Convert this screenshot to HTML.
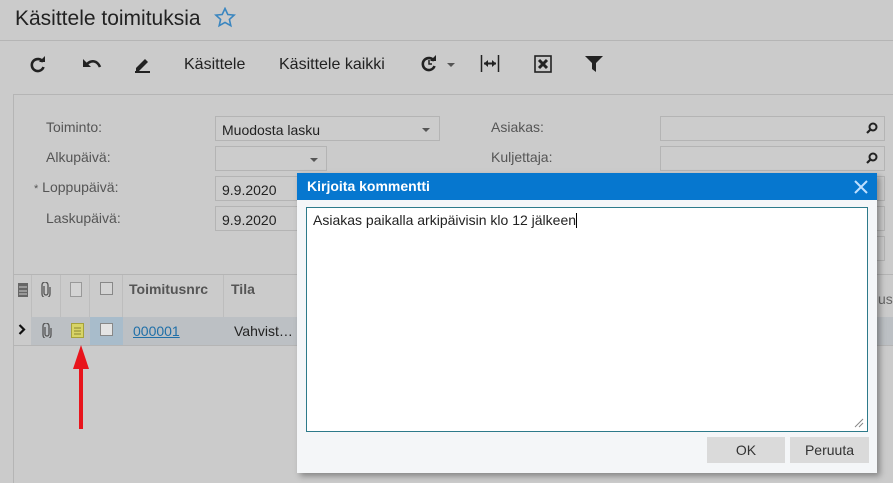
<!DOCTYPE html>
<html><head><meta charset="utf-8"><style>
*{margin:0;padding:0;box-sizing:border-box}
body{width:893px;height:483px;overflow:hidden;background:#cbcbcb;font-family:"Liberation Sans",Arial,sans-serif;position:relative;color:#222}
.a{position:absolute}
.t{font-size:14px;color:#555}
.fld{position:absolute;border:1px solid #b4b4b4;background:#cccccc;height:25px;font-size:14px;padding:5px 0 0 6px;color:#222}
.dd{position:absolute;width:0;height:0;border-left:4px solid transparent;border-right:4px solid transparent;border-top:4px solid #555}
.tb{position:absolute;top:56px;font-size:16px;color:#222}
</style></head><body>
<div class="a" style="left:15px;top:7px;font-size:21px;color:#222">Käsittele toimituksia</div>
<svg class="a" style="left:214px;top:7px" width="22" height="21" viewBox="0 0 22 21"><path d="M11 1.5l2.8 6 6.4.6-4.8 4.3 1.4 6.3L11 15.4l-5.8 3.3 1.4-6.3L1.8 8.1l6.4-.6z" fill="none" stroke="#3a86c0" stroke-width="1.6"/></svg>
<div class="a" style="left:0;top:40px;width:893px;height:1px;background:#b5b5b5"></div>
<svg class="a" style="left:29px;top:56px" width="18" height="18" viewBox="0 0 18 18"><path d="M14 6A6 6 0 1 0 14.5 11" fill="none" stroke="#222" stroke-width="2.6"/><path d="M10 6h6V0z" fill="#222"/></svg>
<svg class="a" style="left:82px;top:57px" width="20" height="14" viewBox="0 0 20 14"><path d="M5 7c4-4 10-4 13 3" fill="none" stroke="#222" stroke-width="2.6"/><path d="M1 2v8h8z" fill="#222"/></svg>
<svg class="a" style="left:133px;top:55px" width="20" height="18" viewBox="0 0 20 18"><path d="M3 13l9-9 3 3-9 9H3z" fill="#222"/><rect x="2" y="16" width="15" height="2" fill="#222"/></svg>
<div class="tb" style="left:184px">Käsittele</div>
<div class="tb" style="left:279px">Käsittele kaikki</div>
<svg class="a" style="left:420px;top:55px" width="18" height="18" viewBox="0 0 18 18"><path d="M14 6A6 6 0 1 0 14.5 11" fill="none" stroke="#222" stroke-width="2.6"/><path d="M10 6h6V0z" fill="#222"/><path d="M9 5v4h3" fill="none" stroke="#222" stroke-width="1.5"/></svg>
<div class="dd" style="left:447px;top:63px"></div>
<svg class="a" style="left:480px;top:55px" width="20" height="17" viewBox="0 0 20 17"><path d="M1.5 0v17M18.5 0v17" stroke="#222" stroke-width="1.5"/><path d="M4 8.5h12" stroke="#222" stroke-width="2"/><path d="M4 8.5l4-3.5v7zM16 8.5l-4-3.5v7z" fill="#222"/></svg>
<svg class="a" style="left:534px;top:55px" width="18" height="18" viewBox="0 0 18 18"><rect x="1" y="1" width="16" height="16" fill="none" stroke="#222" stroke-width="1.6"/><path d="M5 5l8 8M13 5l-8 8" stroke="#222" stroke-width="3"/></svg>
<svg class="a" style="left:585px;top:56px" width="18" height="16" viewBox="0 0 18 16"><path d="M0 0h18l-7 7v9l-4-3V7z" fill="#222"/></svg>
<div class="a" style="left:13px;top:94px;width:880px;height:1px;background:#b5b5b5"></div>
<div class="a" style="left:13px;top:94px;width:1px;height:389px;background:#b5b5b5"></div>
<div class="a t" style="left:46px;top:119px">Toiminto:</div>
<div class="a t" style="left:46px;top:149px">Alkupäivä:</div>
<div class="a t" style="left:34px;top:179px"><span style="font-size:11px">*</span> Loppupäivä:</div>
<div class="a t" style="left:46px;top:210px">Laskupäivä:</div>
<div class="fld" style="left:215px;top:116px;width:225px">Muodosta lasku</div><div class="dd" style="left:422px;top:128px"></div>
<div class="fld" style="left:215px;top:146px;width:112px"></div><div class="dd" style="left:310px;top:158px"></div>
<div class="fld" style="left:215px;top:176px;width:90px">9.9.2020</div>
<div class="fld" style="left:215px;top:206px;width:90px">9.9.2020</div>
<div class="a t" style="left:491px;top:119px">Asiakas:</div>
<div class="a t" style="left:491px;top:149px">Kuljettaja:</div>
<div class="fld" style="left:660px;top:116px;width:225px"></div>
<div class="fld" style="left:660px;top:146px;width:225px"></div>
<svg class="a" style="left:866px;top:122px" width="12" height="12" viewBox="0 0 12 12"><circle cx="7" cy="5" r="3.5" fill="none" stroke="#222" stroke-width="2"/><path d="M4.5 7.5L1 11" stroke="#222" stroke-width="2.2"/></svg>
<svg class="a" style="left:866px;top:152px" width="12" height="12" viewBox="0 0 12 12"><circle cx="7" cy="5" r="3.5" fill="none" stroke="#222" stroke-width="2"/><path d="M4.5 7.5L1 11" stroke="#222" stroke-width="2.2"/></svg>
<div class="fld" style="left:860px;top:176px;width:25px"></div>
<div class="fld" style="left:860px;top:206px;width:25px"></div>
<div class="fld" style="left:860px;top:236px;width:25px"></div>
<div class="a" style="left:13px;top:274px;width:880px;height:1px;background:#b5b5b5"></div>
<div class="a" style="left:31px;top:317px;width:862px;height:28px;background:#bcc0c4"></div>
<div class="a" style="left:13px;top:345px;width:880px;height:1px;background:#b5b5b5"></div>
<div class="a" style="left:90px;top:317px;width:33px;height:28px;background:#a8bccb"></div>
<div class="a" style="left:31px;top:275px;width:1px;height:42px;background:#bdbdbd"></div>
<div class="a" style="left:60px;top:275px;width:1px;height:42px;background:#bdbdbd"></div>
<div class="a" style="left:89px;top:275px;width:1px;height:42px;background:#bdbdbd"></div>
<div class="a" style="left:122px;top:275px;width:1px;height:42px;background:#bdbdbd"></div>
<div class="a" style="left:223px;top:275px;width:1px;height:42px;background:#bdbdbd"></div>
<svg class="a" style="left:17px;top:282px" width="12" height="16" viewBox="0 0 12 16"><rect x="1" y="1" width="10" height="14" fill="#666"/><path d="M2 5h8M2 9h8M2 12h8" stroke="#ccc"/></svg>
<svg class="a" style="left:41px;top:282px" width="10" height="15" viewBox="0 0 10 15"><path d="M3 4v7a2 2 0 0 0 4 0V3a3 3 0 0 0-6 0v9a4 4 0 0 0 8 0V5" fill="none" stroke="#555" stroke-width="1.3"/></svg>
<svg class="a" style="left:42px;top:323px" width="10" height="15" viewBox="0 0 10 15"><path d="M3 4v7a2 2 0 0 0 4 0V3a3 3 0 0 0-6 0v9a4 4 0 0 0 8 0V5" fill="none" stroke="#555" stroke-width="1.3"/></svg>
<div class="a" style="left:70px;top:282px;width:12px;height:15px;border:1px solid #999;background:#d4d4d4"></div>
<svg class="a" style="left:71px;top:323px" width="13" height="15" viewBox="0 0 13 15"><rect x=".5" y=".5" width="12" height="14" fill="#d8d466" stroke="#a6a23a"/><path d="M3 5h7M3 8h7M3 11h7" stroke="#8a8630"/></svg>
<div class="a" style="left:100px;top:282px;width:13px;height:13px;border:1px solid #888;background:#d4d4d4"></div>
<div class="a" style="left:100px;top:323px;width:13px;height:13px;border:1px solid #888;background:#e4e4e4"></div>
<div class="a" style="left:129px;top:281px;font-size:14px;font-weight:bold;color:#555">Toimitusnrc</div>
<div class="a" style="left:231px;top:281px;font-size:14px;font-weight:bold;color:#555">Tila</div>
<svg class="a" style="left:18px;top:324px" width="8" height="11" viewBox="0 0 8 11"><path d="M1.5 1l4.5 4.5L1.5 10" fill="none" stroke="#111" stroke-width="2.2"/></svg>
<div class="a" style="left:133px;top:323px;font-size:14px;color:#1f6fa8;text-decoration:underline">000001</div>
<div class="a" style="left:234px;top:323px;font-size:14px;color:#222">Vahvist…</div>
<div class="a" style="left:878px;top:291px;font-size:14px;color:#666">us</div>
<div class="a" style="left:79px;top:355px;width:4px;height:74px;background:#e8141c"></div>
<div class="a" style="left:73px;top:345px;width:0;height:0;border-left:8px solid transparent;border-right:8px solid transparent;border-bottom:24px solid #e8141c"></div>
<div class="a" style="left:297px;top:173px;width:580px;height:300px;background:#f4f6f8;box-shadow:3px 3px 6px rgba(0,0,0,.35)"></div>
<div class="a" style="left:297px;top:173px;width:580px;height:27px;background:#0677cf"></div>
<div class="a" style="left:307px;top:178px;font-size:14px;font-weight:bold;color:#fff">Kirjoita kommentti</div>
<svg class="a" style="left:854px;top:180px" width="14" height="14" viewBox="0 0 14 14"><path d="M1 1l12 12M13 1L1 13" stroke="#bfe0ff" stroke-width="2"/></svg>
<div class="a" style="left:306px;top:207px;width:562px;height:225px;background:#fff;border:1px solid #2d7a8a"></div>
<div class="a" style="left:313px;top:212px;font-size:14px;color:#222">Asiakas paikalla arkipäivisin klo 12 jälkeen<span style="display:inline-block;width:1px;height:15px;background:#000;vertical-align:-3px"></span></div>
<svg class="a" style="left:852px;top:416px" width="12" height="12" viewBox="0 0 12 12"><path d="M11 3L3 11M11 7L7 11" stroke="#888"/></svg>
<div class="a" style="left:707px;top:437px;width:78px;height:26px;background:#dadada;font-size:14px;color:#333;text-align:center;line-height:26px">OK</div>
<div class="a" style="left:790px;top:437px;width:79px;height:26px;background:#dadada;font-size:14px;color:#333;text-align:center;line-height:26px">Peruuta</div>
</body></html>
